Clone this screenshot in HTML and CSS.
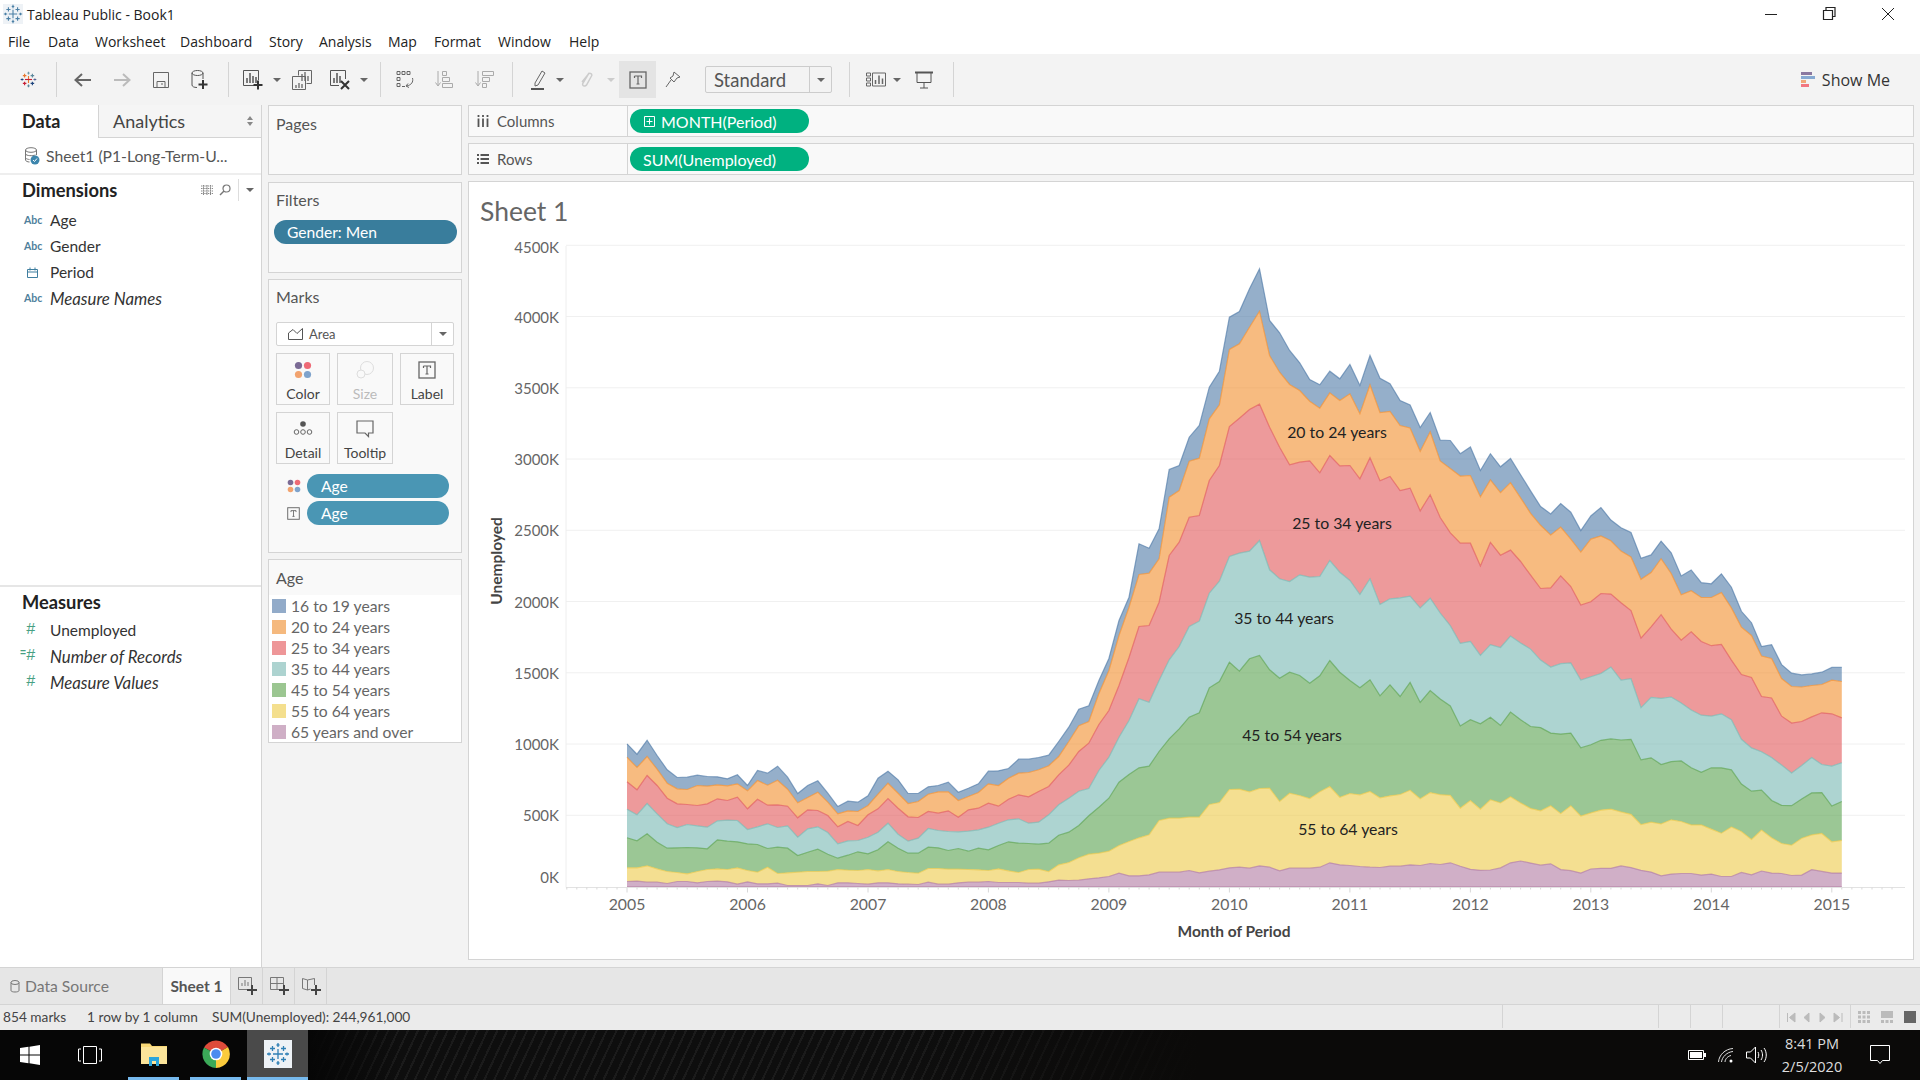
FILE: index.html
```html
<!DOCTYPE html>
<html lang="en">
<head>
    <meta charset="UTF-8">
    <title>Tableau Public - Book1</title>
    <link rel="stylesheet" href="styles.css">
</head>
<body>
    <svg class="defs" width="0" height="0">
        <symbol id="flake" viewBox="0 0 24 24">
            <path d="M12 7v10M7 12h10M6.500 4v5M4 6.500h5M17.500 4v5M15 6.500h5M6.500 15v5M4 17.500h5M17.500 15v5M15 17.500h5M12 1v4M10.500 3h3M12 19v4M10.500 21h3M3 10.500v3M1 12h4M21 10.500v3M19 12h4" fill="none" stroke="currentColor" stroke-width="1.300"/>
        </symbol>
        <symbol id="color-dots" viewBox="0 0 20 20">
            <circle cx="5" cy="5" r="4" fill="#7b6b95"/><circle cx="15" cy="5" r="4" fill="#ee6a76"/>
            <circle cx="5" cy="15" r="4" fill="#f2a36f"/><circle cx="15" cy="15" r="4" fill="#7fa3cc"/>
        </symbol>
        <symbol id="text-box" viewBox="0 0 18 18">
            <rect x="1" y="1" width="16" height="16" fill="none" stroke="#666" stroke-width="1.300"/>
            <path d="M5.500 5h7v2M5.500 5v2M9 5v8M7.500 13h3" fill="none" stroke="#666" stroke-width="1.200"/>
        </symbol>
        <symbol id="plus-mark" viewBox="0 0 10 10">
            <path d="M5 0v10M0 5h10" stroke="#444" stroke-width="2"/>
        </symbol>
    </svg>

    <header class="titlebar">
        <svg class="app-flake" width="20" height="20"><use href="#flake"/></svg>
        <span class="app-title">Tableau Public - Book1</span>
        <div class="win-controls">
            <svg width="57" height="16"><path d="M0 8.500h12" stroke="#222"/></svg>
            <svg width="60" height="16"><path d="M1.500 4.500h9v9h-9zM4 4.500v-3h9v9h-2.500" fill="none" stroke="#222" stroke-width="1.200"/></svg>
            <svg width="12" height="16"><path d="M0 2l12 12M12 2L0 14" stroke="#222"/></svg>
        </div>
    </header>

    <nav class="menubar">
        <span class="m-file">File</span><span class="m-data">Data</span><span class="m-worksheet">Worksheet</span><span class="m-dashboard">Dashboard</span><span class="m-story">Story</span><span class="m-analysis">Analysis</span><span class="m-map">Map</span><span class="m-format">Format</span><span class="m-window">Window</span><span>Help</span>
    </nav>

    <div class="toolbar">
        <div class="tool w56">
            <svg width="17" height="17" viewBox="0 0 24 24" fill="none" stroke-width="1.600">
                <path d="M12 7v10" stroke="#e8762c"/><path d="M7 12h10" stroke="#c72035"/>
                <path d="M6.500 4v5M4 6.500h5" stroke="#e8762c"/><path d="M17.500 4v5M15 6.500h5" stroke="#5b879b"/>
                <path d="M6.500 15v5M4 17.500h5" stroke="#c72035"/><path d="M17.500 15v5M15 17.500h5" stroke="#1f457e"/>
                <path d="M12 1v4M10.500 3h3" stroke="#7099a6"/><path d="M12 19v4M10.500 21h3" stroke="#59879b"/>
                <path d="M3 10.500v3M1 12h4" stroke="#1f447e"/><path d="M21 10.500v3M19 12h4" stroke="#5b6591"/>
            </svg>
        </div>
        <i class="tool-sep"></i>
        <div class="tool w39 ml6"><svg width="18" height="14"><path d="M1 7h16M8 1L1.500 7L8 13" fill="none" stroke="#666" stroke-width="2"/></svg></div>
        <div class="tool w39"><svg width="18" height="14"><path d="M1 7h16M10 1l6.500 6L10 13" fill="none" stroke="#bbb" stroke-width="2"/></svg></div>
        <div class="tool w39"><svg width="16" height="16"><path d="M.5.500h15v15H.5zM4 15.500V9.500h8v6M8 12h2" fill="none" stroke="#666"/></svg></div>
        <div class="tool w39"><svg width="18" height="20"><ellipse cx="6.500" cy="3" rx="5.500" ry="2.500" fill="none" stroke="#555"/><path d="M1 3v12c0 1.500 2 2.500 5 2.500M12 3v6" fill="none" stroke="#555"/><path d="M12 10v9M7.500 14.500h9" stroke="#333" stroke-width="2"/></svg></div>
        <i class="tool-sep ml9"></i>
        <div class="tool w24 ml12"><svg width="20" height="20"><path d="M15.500 10V.500H.5v15H11" fill="none" stroke="#555"/><path d="M4 13V8M7 13V3M10 13V6M13 13V7" stroke="#555" stroke-width="1.500"/><path d="M15 10.500v9M10.500 15h9" stroke="#333" stroke-width="2"/></svg></div>
        <div class="tool w24"><i class="caret"></i></div>
        <div class="tool w26"><svg width="20" height="20"><path d="M6.500 5.500V.5h13v13h-5" fill="none" stroke="#666"/><path d="M.5 6.500h13v13H.5z" fill="#f3f3f3" stroke="#666"/><path d="M4 18v-3M7 18v-5M10 18v-4M10 11V4M13 11V2M16 11V6" stroke="#666" stroke-width="1.300"/></svg></div>
        <div class="tool w26 ml12"><svg width="20" height="20"><path d="M15.500 9V.500H.5v15H9" fill="none" stroke="#555"/><path d="M4 13V8M7 13V3M10 13V6" stroke="#555" stroke-width="1.500"/><path d="M11 11l8 8M19 11l-8 8" stroke="#333" stroke-width="2"/></svg></div>
        <div class="tool w22"><i class="caret"></i></div>
        <i class="tool-sep ml5"></i>
        <div class="tool w40 ml4"><svg width="18" height="20"><path d="M1 1.500h3v3H1zM6 1.500h3v3H6zM11 1.500h3v3h-3zM1 7.500h3v3H1zM1 13.500h3v3H1zM6 16.500h3" fill="none" stroke="#666"/><path d="M16.500 8c1 4-1 7-6 8M12 13.500l-2 2.500 3 1.500" fill="none" stroke="#666"/></svg></div>
        <div class="tool w40"><svg width="20" height="20"><path d="M3 1v14M.5 12.500L3 16l2.500-3.500" fill="none" stroke="#aaa"/><path d="M7.500 1.500h4v4h-4zM7.500 7.500h7v4h-7zM7.500 13.500h10v4h-10z" fill="none" stroke="#aaa"/></svg></div>
        <div class="tool w40"><svg width="20" height="20"><path d="M3 1v14M.5 12.500L3 16l2.500-3.500" fill="none" stroke="#aaa"/><path d="M7.500 1.500h11v4h-11zM7.500 7.500h7v4h-7zM7.500 13.500h4v4h-4z" fill="none" stroke="#aaa"/></svg></div>
        <i class="tool-sep ml7"></i>
        <div class="tool w24 ml14"><svg width="16" height="20"><path d="M4 13l7-12 3 2-7 12-3 1z" fill="none" stroke="#666"/><path d="M0 19h13" stroke="#555" stroke-width="2"/></svg></div>
        <div class="tool w18"><i class="caret"></i></div>
        <div class="tool w34"><svg width="14" height="20"><path d="M10 3l-6 10c-1.500 3 2 4 3.500 2l5-9c1-2-1.500-3.500-3-2L3 12" fill="none" stroke="#ccc" stroke-width="1.500"/></svg></div>
        <div class="tool w16"><i class="caret caret-off"></i></div>
        <div class="tool w37 tool-on"><svg width="18" height="18"><use href="#text-box"/></svg></div>
        <div class="tool w34"><svg width="16" height="18"><path d="M9 1l6 5-3 1-3 4-4-4 3-2zM6 9l-5 7" fill="none" stroke="#666"/></svg></div>
        <div class="std-select ml15"><span class="std-text">Standard</span><span class="std-arrow"><i class="caret"></i></span></div>
        <i class="tool-sep ml17"></i>
        <div class="tool w24 ml14"><svg width="20" height="16"><path d="M.5 1h4v3h-4zM.5 6h4v3h-4zM.5 11h4v3h-4zM6.500 1h13v13h-13z" fill="none" stroke="#666"/><path d="M9.500 12V8M13 12V3.500M16.500 12V6.500" stroke="#666" stroke-width="1.500"/></svg></div>
        <div class="tool w18"><i class="caret"></i></div>
        <div class="tool w36"><svg width="18" height="18"><path d="M0 1.500h18" stroke="#555" stroke-width="2"/><path d="M2 2v9.500h14V2M9 11.500V17M5 17h8" fill="none" stroke="#555"/></svg></div>
        <i class="tool-sep ml11"></i>
        <div class="show-me">
            <svg width="14" height="16"><rect width="11" height="3" fill="#8a78a0"/><rect y="4" width="14" height="3" fill="#86a9d2"/><rect y="8" width="5" height="3" fill="#f0a777"/><rect y="12" width="8" height="3" fill="#f27680"/></svg>
            <span>Show Me</span>
        </div>
    </div>

    <main class="workspace">
        <aside class="data-pane">
            <div class="pane-tabs">
                <div class="pane-tab pane-tab-on">Data</div>
                <div class="pane-tab">Analytics<span class="updown"></span></div>
            </div>
            <div class="source-row">
                <svg width="16" height="18"><ellipse cx="7" cy="3" rx="5.500" ry="2.300" fill="none" stroke="#777"/><path d="M1.500 3v10c0 1 2 2 4 2M12.500 3v5" fill="none" stroke="#777"/><path d="M1.500 7c1 2 7 2 10 1M1.500 11c1 1 3 1.500 4 1.500" fill="none" stroke="#777"/><circle cx="11" cy="13" r="4.500" fill="#3d86ad"/><path d="M9 13l1.500 1.500L13 11.500" fill="none" stroke="#fff"/></svg>
                <span>Sheet1 (P1-Long-Term-U...</span>
            </div>
            <section class="dims">
                <div class="field-head">
                    <h3>Dimensions</h3>
                    <svg class="head-grid" width="12" height="10"><path d="M0 1h12M0 3.500h12M0 6h12M0 8.500h12M2.500 0v10M6 0v10M9.500 0v10" stroke="#888" stroke-dasharray="1.500 .7"/></svg>
                    <svg class="head-find" width="12" height="12"><circle cx="7.500" cy="4.500" r="3.500" fill="none" stroke="#777" stroke-width="1.200"/><path d="M5 7l-4 4" stroke="#777" stroke-width="1.400"/></svg>
                    <span class="head-sep"><i class="caret"></i></span>
                </div>
                <div class="field"><span class="f-abc">Abc</span>Age</div>
                <div class="field"><span class="f-abc">Abc</span>Gender</div>
                <div class="field"><span class="f-icon"><svg width="12" height="11"><path d="M.5 2.500h10v8H.5zM.5 5h10M3 .5v3M8 .5v3" fill="none" stroke="#3f7e9f"/></svg></span>Period</div>
                <div class="field field-calc"><span class="f-abc">Abc</span>Measure Names</div>
            </section>
            <section class="measures">
                <div class="field-head"><h3>Measures</h3></div>
                <div class="field"><span class="f-hash">#</span>Unemployed</div>
                <div class="field field-calc"><span class="f-hash"><b>=</b>#</span>Number of Records</div>
                <div class="field field-calc"><span class="f-hash">#</span>Measure Values</div>
            </section>
        </aside>

        <div class="cards">
            <section class="card card-pages"><div class="card-label">Pages</div></section>
            <section class="card card-filters">
                <div class="card-label">Filters</div>
                <div class="pill pill-filter">Gender: Men</div>
            </section>
            <section class="card card-marks">
                <div class="card-label">Marks</div>
                <div class="mark-type">
                    <svg width="16" height="12"><path d="M.5 11.500V5L5 1.500l4 4L14.500 .5v11z" fill="none" stroke="#555"/></svg>
                    <span>Area</span>
                    <span class="mark-arrow"><i class="caret"></i></span>
                </div>
                <div class="mark-btns">
                    <div class="mark-btn"><svg width="18" height="18"><use href="#color-dots"/></svg>Color</div>
                    <div class="mark-btn mark-off"><svg width="18" height="18"><circle cx="11" cy="7" r="6.500" fill="none" stroke="#ddd"/><circle cx="5" cy="13" r="4" fill="#f9f9f9" stroke="#ddd"/></svg>Size</div>
                    <div class="mark-btn"><svg width="18" height="18"><use href="#text-box"/></svg>Label</div>
                    <div class="mark-btn"><svg width="20" height="18"><circle cx="10" cy="4" r="2.800" fill="#555"/><circle cx="3.500" cy="12" r="2.300" fill="none" stroke="#666"/><circle cx="10" cy="12" r="2.300" fill="none" stroke="#666"/><circle cx="16.500" cy="12" r="2.300" fill="none" stroke="#666"/></svg>Detail</div>
                    <div class="mark-btn"><svg width="18" height="18"><path d="M1 1h16v12h-4.500v3.500L9 13H1z" fill="none" stroke="#666" stroke-width="1.200"/></svg>Tooltip</div>
                </div>
                <div class="mark-pill"><svg width="14" height="14"><use href="#color-dots"/></svg><div class="pill pill-dim">Age</div></div>
                <div class="mark-pill"><svg width="13" height="13"><use href="#text-box"/></svg><div class="pill pill-dim">Age</div></div>
            </section>
            <section class="card card-legend">
                <div class="card-label">Age</div>
                <ul class="legend">
                    <li><i class="sw sw-1"></i>16 to 19 years</li>
                    <li><i class="sw sw-2"></i>20 to 24 years</li>
                    <li><i class="sw sw-3"></i>25 to 34 years</li>
                    <li><i class="sw sw-4"></i>35 to 44 years</li>
                    <li><i class="sw sw-5"></i>45 to 54 years</li>
                    <li><i class="sw sw-6"></i>55 to 64 years</li>
                    <li><i class="sw sw-7"></i>65 years and over</li>
                </ul>
            </section>
        </div>

        <div class="view">
            <div class="shelf">
                <div class="shelf-label"><svg width="12" height="12"><path d="M1.500 0v2M1.500 3.500V12M6 0v2M6 3.500V12M10.500 0v2M10.500 3.500V12" stroke="#555" stroke-width="1.800"/></svg>Columns</div>
                <div class="pill pill-green pill-month"><svg width="11" height="11"><path d="M.5.500h10v10H.5zM5.500 2.500v6M2.500 5.500h6" fill="none" stroke="#fff"/></svg>MONTH(Period)</div>
            </div>
            <div class="shelf">
                <div class="shelf-label"><svg width="12" height="12"><path d="M0 2h2M3.500 2H12M0 6h2M3.500 6H12M0 10h2M3.500 10H12" stroke="#555" stroke-width="1.800"/></svg>Rows</div>
                <div class="pill pill-green">SUM(Unemployed)</div>
            </div>
            <div class="viz">
                <h2 class="sheet-title">Sheet 1</h2>
                <svg id="chart" class="chart" viewBox="469 232 1444 727" width="1444" height="727"></svg>
            </div>
        </div>
    </main>

    <div class="sheet-tabs">
        <div class="tab-source"><svg width="10" height="13"><ellipse cx="5" cy="2.500" rx="4" ry="2" fill="none" stroke="#777"/><path d="M1 2.500v8c0 2 8 2 8 0v-8" fill="none" stroke="#777"/></svg>Data Source</div>
        <div class="tab-sheet">Sheet 1</div>
        <div class="tab-new"><svg width="20" height="18"><path d="M13.500 8V.5H.5v12H9" fill="none" stroke="#777"/><path d="M4 9V6M7 9V3M10 9V5" stroke="#777"/><use href="#plus-mark" x="9" y="8" width="10" height="10"/></svg></div>
        <div class="tab-new"><svg width="20" height="18"><path d="M13.500 8V.5H.5v12H9M.5 6.500h13M7 .5v12" fill="none" stroke="#777"/><use href="#plus-mark" x="9" y="8" width="10" height="10"/></svg></div>
        <div class="tab-new"><svg width="20" height="18"><path d="M.5 1.500l5 1.500 7-1.500V8M.5 1.500v10l5 1.500 3-1M5.500 3v10" fill="none" stroke="#777"/><use href="#plus-mark" x="9" y="8" width="10" height="10"/></svg></div>
    </div>

    <div class="statusbar">
        <span class="st-marks">854 marks</span>
        <span class="st-rows">1 row by 1 column</span>
        <span>SUM(Unemployed): 244,961,000</span>
        <div class="st-cells">
            <div class="st-cell w156"></div>
            <div class="st-cell w32"></div>
            <div class="st-cell w32"></div>
            <div class="st-cell w57"></div>
            <div class="st-cell w71">
                <svg width="62" height="12"><path d="M.5 2v9M8 2L2.500 6.500 8 11zM22 2l-5 4.500 5 4.500zM33 2l5 4.500-5 4.500zM47 2l5.500 4.500L47 11zM55 2v9" fill="#bbb" stroke="#bbb" transform="translate(3 0)"/></svg>
            </div>
            <div class="st-cell st-views">
                <svg width="12" height="12"><path d="M0 0h3v3H0zM4.500 0h3v3h-3zM9 0h3v3H9zM0 4.500h3v3H0zM4.500 4.500h3v3h-3zM9 4.500h3v3H9zM0 9h3v3H0zM4.500 9h3v3h-3zM9 9h3v3H9z" fill="#bbb"/></svg>
                <svg width="12" height="12"><path d="M0 0h12v7H0zM0 9h3v3H0zM4.500 9h3v3h-3zM9 9h3v3H9z" fill="#bbb"/></svg>
                <svg width="12" height="12"><path d="M0 0h12v12H0z" fill="#666"/></svg>
            </div>
        </div>
    </div>

    <footer class="taskbar">
        <svg class="tb-win" width="20" height="20"><path d="M0 3l8.500-1.200v7.700H0zM9.500 1.700L20 0v9.500H9.500zM0 10.500h8.500v7.700L0 17zM9.500 10.500H20V20L9.500 18.300z" fill="#fff"/></svg>
        <svg class="tb-view" width="24" height="18"><path d="M5.500.5h13v17h-13zM3 3H.5v12H3M21 3h2.500v12H21" fill="none" stroke="#fff"/></svg>
        <div class="tb-app tb-explorer"><svg width="28" height="24"><path d="M1 4V1.500h9L12 4h15v18H1z" fill="#f8d775"/><path d="M1 5h26v17H1z" fill="#fbe49a"/><path d="M9 15h10v9h-3v-5h-4v5H9z" fill="#2ba5dc"/></svg></div>
        <div class="tb-app tb-chrome"><svg width="28" height="28" viewBox="0 0 28 28"><path d="M14 14L2 7.500A14 14 0 0 1 26 7z" fill="#de4b3a"/><path d="M14 14L26 7A14 14 0 0 1 14 28z" fill="#fbcb3c"/><path d="M14 14L14 28A14 14 0 0 1 2 7.500z" fill="#3ba958"/><circle cx="14" cy="14" r="6.300" fill="#fff"/><circle cx="14" cy="14" r="4.800" fill="#4b8bf0"/></svg></div>
        <div class="tb-app tb-tableau"><span class="tb-tile"><svg width="24" height="24"><use href="#flake"/></svg></span></div>
        <div class="tray">
            <svg width="18" height="10"><path d="M.5.500h15v9H.5z" fill="none" stroke="#fff"/><path d="M2 2h12v6H2z" fill="#fff"/><path d="M16 3h2v4h-2z" fill="#fff"/></svg>
            <svg width="16" height="15"><path d="M.5 14C1 7 7 1 15 .5M3.500 14C4 9 9 4 15 3.500M7 14c0-3 3-6 6-6.500" fill="none" stroke="#ddd"/><circle cx="13" cy="13" r="1.500" fill="#fff"/></svg>
            <svg width="21" height="18"><path d="M.5 6h4l5-5v16l-5-5h-4z" fill="none" stroke="#fff"/><path d="M12 6c1 2 1 4 0 6M15 4c2 3 2 7 0 10M18 2c3 4 3 10 0 14" fill="none" stroke="#fff"/></svg>
            <div class="clock"><span>8:41 PM</span><span>2/5/2020</span></div>
            <svg class="tray-note" width="20" height="20"><path d="M.5.500h19v15h-7l-2.500 3-2.500-3h-7z" fill="none" stroke="#fff"/></svg>
        </div>
    </footer>

    <script src="chart.js"></script>
</body>
</html>
```

FILE: styles.css
```css
* {
    box-sizing: border-box;
}
body {
    margin: 0;
    width: 1920px;
    height: 1080px;
    overflow: hidden;
    font-family: Lato, "Open Sans", sans-serif;
    font-size: 15px;
    color: #333;
    background-color: #fff;
}
.defs {
    display: block;
    height: 0;
}
i {
    display: block;
}
.titlebar {
    height: 28px;
    display: flex;
    align-items: center;
    padding-left: 3px;
    font-family: "Open Sans", sans-serif;
    font-size: 14px;
    color: #222;
}
.app-flake {
    color: #4a7fa5;
    background-color: #eef2f6;
    margin-right: 4px;
}
.win-controls {
    margin-left: auto;
    display: flex;
    padding-right: 26px;
}
.menubar {
    height: 26px;
    display: flex;
    align-items: center;
    padding-left: 8px;
    font-family: "Open Sans", sans-serif;
    font-size: 14px;
    color: #222;
}
.m-file { width: 40px; }
.m-data { width: 47px; }
.m-worksheet { width: 85px; }
.m-dashboard { width: 89px; }
.m-story { width: 50px; }
.m-analysis { width: 69px; }
.m-map { width: 46px; }
.m-format { width: 64px; }
.m-window { width: 71px; }
.toolbar {
    height: 51px;
    display: flex;
    align-items: center;
    background-color: #f3f3f3;
}
.tool {
    height: 37px;
    display: flex;
    align-items: center;
    justify-content: center;
    flex-shrink: 0;
}
.tool-on {
    background-color: #e4e4e4;
}
.tool-sep {
    width: 1px;
    height: 35px;
    background-color: #d4d4d4;
    flex-shrink: 0;
}
.w16 { width: 16px; }
.w18 { width: 18px; }
.w22 { width: 22px; }
.w24 { width: 24px; }
.w26 { width: 26px; }
.w34 { width: 34px; }
.w36 { width: 36px; }
.w37 { width: 37px; }
.w39 { width: 39px; }
.w40 { width: 40px; }
.w56 { width: 56px; }
.ml4 { margin-left: 4px; }
.ml5 { margin-left: 5px; }
.ml6 { margin-left: 6px; }
.ml7 { margin-left: 7px; }
.ml9 { margin-left: 9px; }
.ml11 { margin-left: 11px; }
.ml12 { margin-left: 12px; }
.ml14 { margin-left: 14px; }
.ml15 { margin-left: 15px; }
.ml17 { margin-left: 17px; }
.caret {
    width: 0;
    height: 0;
    border-left: 4px solid transparent;
    border-right: 4px solid transparent;
    border-top: 4px solid #666;
}
.caret-off {
    border-top-color: #ccc;
}
.std-select {
    width: 127px;
    height: 27px;
    display: flex;
    align-items: center;
    border: 1px solid #ccc;
    border-radius: 2px;
    font-size: 18.500px;
    color: #555;
}
.std-text {
    width: 103px;
    padding-left: 8px;
}
.std-arrow {
    flex: 1;
    height: 100%;
    display: flex;
    align-items: center;
    justify-content: center;
    border-left: 1px solid #ccc;
}
.show-me {
    margin-left: auto;
    margin-right: 30px;
    display: flex;
    align-items: center;
    gap: 7px;
    font-family: "Open Sans", sans-serif;
    font-size: 16px;
    color: #333;
}
.workspace {
    height: 862px;
    display: flex;
    background-color: #f3f3f3;
}
.data-pane {
    width: 262px;
    background-color: #fff;
    border-right: 1px solid #d4d4d4;
    flex-shrink: 0;
}
.pane-tabs {
    display: flex;
    height: 33px;
}
.pane-tab {
    flex: 1;
    position: relative;
    padding: 5px 0 0 14px;
    font-size: 18px;
    background-color: #f5f5f5;
    border-left: 1px solid #d4d4d4;
    border-bottom: 1px solid #d4d4d4;
    color: #444;
}
.pane-tab-on {
    flex: none;
    width: 98px;
    padding-left: 22px;
    font-weight: 700;
    background-color: #fff;
    border: 0;
    color: #222;
}
.updown {
    position: absolute;
    right: 8px;
    top: 11px;
    width: 0;
    height: 0;
    border-left: 3px solid transparent;
    border-right: 3px solid transparent;
    border-bottom: 4px solid #888;
}
.updown::after {
    content: "";
    position: absolute;
    left: -3px;
    top: 6px;
    border-left: 3px solid transparent;
    border-right: 3px solid transparent;
    border-top: 4px solid #888;
}
.source-row {
    height: 37px;
    display: flex;
    align-items: center;
    gap: 6px;
    padding-left: 24px;
    font-size: 15.700px;
    color: #555;
    border-bottom: 2px solid #eee;
}
.dims {
    height: 412px;
    border-bottom: 2px solid #e6e6e6;
}
.field-head {
    height: 30px;
    margin-bottom: 2px;
    display: flex;
    align-items: center;
    padding-left: 22px;
}
.field-head h3 {
    margin: 0;
    font-size: 18.300px;
    font-weight: 700;
    color: #222;
}
.head-grid {
    margin-left: auto;
}
.head-find {
    margin-left: 6px;
}
.head-sep {
    height: 22px;
    margin-left: 7px;
    width: 23px;
    display: flex;
    align-items: center;
    justify-content: center;
    border-left: 1px solid #ddd;
}
.measures .field-head {
    height: 29px;
    margin-bottom: 1px;
}
.field {
    height: 26px;
    display: flex;
    align-items: center;
    padding-left: 24px;
    font-size: 15.500px;
    color: #333;
}
.field-calc {
    font-size: 16.800px;
    font-style: italic;
}
.f-abc, .f-icon, .f-hash {
    width: 26px;
    flex-shrink: 0;
    font-size: 10.500px;
    font-style: normal;
    font-weight: 700;
    color: #4f7f9c;
}
.f-icon {
    padding-left: 3px;
    display: flex;
}
.f-hash {
    padding-left: 2px;
    font-family: "Liberation Mono", monospace;
    font-size: 16px;
    font-weight: 400;
    color: #47a083;
    position: relative;
}
.f-hash b {
    position: absolute;
    left: -4px;
    top: 1px;
    font-size: 10px;
}
.cards {
    width: 206px;
    padding: 0 6px;
    flex-shrink: 0;
    display: flex;
    flex-direction: column;
}
.card {
    border: 1px solid #d4d4d4;
    background-color: #f9f9f9;
}
.card-label {
    height: 35px;
    padding: 8px 0 0 7px;
    font-size: 16px;
    color: #555;
}
.card-pages {
    height: 70px;
}
.card-filters {
    height: 91px;
    margin-top: 7px;
}
.card-filters .card-label {
    height: 37px;
    padding-top: 7px;
}
.pill {
    height: 24px;
    display: flex;
    align-items: center;
    border-radius: 12px;
    font-size: 15.600px;
    color: #fff;
}
.pill-filter {
    margin: 0 4px 0 5px;
    padding-left: 13px;
    background-color: #397d9c;
}
.card-marks {
    height: 274px;
    margin-top: 6px;
    padding-left: 7px;
}
.card-marks .card-label {
    height: 42px;
    padding: 7px 0 0 0;
}
.mark-type {
    width: 178px;
    height: 24px;
    display: flex;
    align-items: center;
    padding-left: 11px;
    gap: 5px;
    font-size: 13px;
    color: #555;
    border: 1px solid #d4d4d4;
    border-radius: 2px;
    background-color: #fff;
}
.mark-arrow {
    margin-left: auto;
    width: 22px;
    height: 100%;
    display: flex;
    align-items: center;
    justify-content: center;
    border-left: 1px solid #d4d4d4;
}
.mark-btns {
    margin-top: 7px;
    display: grid;
    grid-template-columns: 54px 56px 54px;
    grid-auto-rows: 52px;
    gap: 7px;
}
.mark-btn {
    display: flex;
    flex-direction: column;
    align-items: center;
    padding-top: 7px;
    gap: 6px;
    font-size: 14px;
    border: 1px solid #d4d4d4;
    color: #444;
}
.mark-off {
    color: #bbb;
}
.mark-pill {
    display: flex;
    align-items: center;
    width: 173px;
    margin-top: 3px;
    padding-left: 11px;
}
.mark-btns + .mark-pill {
    margin-top: 10px;
}
.mark-pill .pill {
    margin-left: auto;
    width: 142px;
}
.pill-dim {
    padding-left: 14px;
    background-color: #4a96b4;
}
.card-legend {
    height: 184px;
    margin-top: 6px;
}
.legend {
    margin: 0;
    padding: 0 0 0 3px;
    list-style: none;
    background-color: #fff;
    height: 147px;
    font-size: 15.700px;
}
.legend li {
    height: 21px;
    display: flex;
    align-items: center;
    gap: 5px;
    color: #666;
}
.sw {
    width: 14px;
    height: 14px;
}
.sw-1 { background-color: #92abc9; }
.sw-2 { background-color: #f5b97e; }
.sw-3 { background-color: #ee9698; }
.sw-4 { background-color: #add3d0; }
.sw-5 { background-color: #9bc691; }
.sw-6 { background-color: #f4df8e; }
.sw-7 { background-color: #cfafc6; }
.view {
    width: 1446px;
    flex-shrink: 0;
}
.shelf {
    height: 32px;
    display: flex;
    align-items: center;
    margin-bottom: 6px;
    background-color: #f9f9f9;
    border: 1px solid #d4d4d4;
}
.shelf-label {
    width: 159px;
    height: 100%;
    display: flex;
    align-items: center;
    gap: 8px;
    padding-left: 8px;
    color: #555;
    border-right: 1px solid #d4d4d4;
}
.pill-green {
    width: 179px;
    margin-left: 2px;
    padding-left: 13px;
    font-size: 16px;
    background-color: #00b180;
}
.pill-month {
    padding-left: 14px;
    gap: 6px;
}
.viz {
    height: 779px;
    background-color: #fff;
    border: 1px solid #d4d4d4;
}
.sheet-title {
    margin: 0;
    height: 50px;
    padding: 13px 0 0 11px;
    font-size: 26.500px;
    font-weight: 400;
    color: #666;
}
.chart {
    display: block;
}
.chart text {
    font-family: Lato, sans-serif;
}
.tick-label {
    font-size: 15px;
    fill: #666;
}
.year-label {
    font-size: 15.800px;
    fill: #666;
}
.axis-title {
    font-size: 15.500px;
    font-weight: 700;
    fill: #444;
}
.area-label {
    font-size: 15.800px;
    fill: #222;
}
.sheet-tabs {
    height: 37px;
    display: flex;
    background-color: #e6e6e6;
    border-top: 1px solid #d4d4d4;
}
.tab-source {
    width: 163px;
    display: flex;
    align-items: center;
    gap: 5px;
    padding-left: 10px;
    font-size: 15.700px;
    color: #777;
    border-right: 1px solid #d4d4d4;
}
.tab-sheet {
    width: 68px;
    display: flex;
    align-items: center;
    justify-content: center;
    font-size: 15.500px;
    font-weight: 700;
    color: #555;
    background-color: #f9f9f9;
    border-right: 1px solid #d4d4d4;
}
.tab-new {
    width: 32px;
    display: flex;
    align-items: center;
    justify-content: center;
    padding-left: 3px;
    border-right: 1px solid #d4d4d4;
}
.statusbar {
    height: 26px;
    display: flex;
    align-items: center;
    padding: 0 0 2px 3px;
    font-size: 13.700px;
    color: #444;
    background-color: #ebebeb;
    border-top: 1px solid #d4d4d4;
}
.st-marks { width: 84px; }
.st-rows { width: 125px; }
.st-cells {
    margin-left: auto;
    height: 100%;
    display: flex;
}
.st-cell {
    height: 100%;
    display: flex;
    align-items: center;
    justify-content: center;
    border-left: 1px solid #d4d4d4;
}
.w156 { width: 156px; }
.w32 { width: 32px; }
.w57 { width: 57px; }
.w71 { width: 71px; }
.st-views {
    width: 70px;
    gap: 11px;
    padding-left: 3px;
}
.taskbar {
    height: 50px;
    display: flex;
    align-items: center;
    color: #fff;
    background-color: #0a0908;
    background-image:
        linear-gradient(90deg, #060606 0, #060606 310px, rgba(10, 9, 8, 0) 400px, rgba(10, 9, 8, 0) 900px, #0b0a09 1200px),
        repeating-linear-gradient(115deg, #1b1b1b 0, #1b1b1b 2px, #0e0e0e 2px, #0e0e0e 9px);
}
.tb-win {
    margin-left: 20px;
}
.tb-view {
    margin-left: 38px;
}
.tb-app {
    height: 50px;
    width: 51px;
    display: flex;
    align-items: center;
    justify-content: center;
    border-bottom: 3px solid #76b9ed;
}
.tb-explorer {
    margin-left: 26px;
}
.tb-chrome {
    margin-left: 11px;
}
.tb-tableau {
    width: 61px;
    margin-left: 6px;
    background-color: #4a4a4a;
}
.tb-tile {
    width: 28px;
    height: 28px;
    display: flex;
    align-items: center;
    justify-content: center;
    color: #2f7fb5;
    background-color: #eef2f6;
}
.tray {
    margin-left: auto;
    display: flex;
    align-items: center;
    gap: 12px;
    padding-right: 30px;
}
.clock {
    width: 66px;
    display: flex;
    flex-direction: column;
    align-items: center;
    gap: 6px;
    font-family: "Open Sans", sans-serif;
    font-size: 14.500px;
    line-height: 17px;
    color: #ddd;
}
.tray-note {
    margin-left: 13px;
}
```

FILE: chart.js
```js
// stack tops, px above the baseline, one value per month from Jan 2005
const tops = [
    [142.7,132.3,146.3,131,116.7,109,109.3,111.3,110,109.7,107.7,111.7,101,116,113.3,120.3,109.3,93,101,105.7,93.3,80,85.3,84.3,90.7,108.3,115.3,106.7,93,93,99.7,101,104.3,94.3,98.3,102.7,115.3,115.7,118,127.3,127.3,129,131.3,145,159.3,177.3,180.7,206,228,266,289.3,342.7,338.3,357.7,417,421,449.3,461,499.3,515.3,569.3,575,597.7,617.7,566,553.7,536,523.7,507,501.7,515.3,507.7,522,501,531,508.3,502.7,486,481.6,459,474,446.5,446,432.8,439.6,416,432.8,419.7,428,411.8,395.6,380,372.6,382.9,374.3,356,370.5,379,366.4,358.8,354,328.2,331.6,345.4,333.7,310.6,316.5,303.8,302.7,312.7,299.3,275.2,263.8,240,241.8,221.9,213.3,211.6,212.6,214.3,219.1,219.1],
    [129.3,119,130,117.3,103.3,97.7,97,101,100.3,101.7,100.7,102.7,95.7,106,101.3,106.3,97.3,83.7,89,94.3,84.3,72.7,75.7,75,81,92.3,103.3,93.3,83,85,92.3,94.7,94.7,86,90,94,102.7,101,108.3,113.3,114,116.7,120.7,130,145,160.7,165,193,216,251,279.3,312,313.3,327.7,389.3,396,425.3,428.3,467.7,481.7,537,542.7,559.3,575.3,531,514.3,502,496,485.3,478.3,493.7,486,492.7,472.7,501.7,474,475,461,458.6,435.2,454.8,425.5,418,410.4,411,389.8,406.6,393.9,403.9,388.7,373.2,361.2,351.6,359.5,347.4,334.4,347.4,350.5,345.7,335.4,329.6,307.2,314,327.8,313,291.7,295.8,289,289,294,278.6,259.4,251,230.5,228,208,200,199.5,201,202,206.4,205],
    [104.7,96.7,111,101,88.3,82.7,82,81,82.7,87.7,86,89.3,77.7,87.3,81.3,81.7,80.3,68.7,76.7,76,71,59.7,65,61,71.7,77.7,88,78.3,69.7,69,75,73.3,75.7,69.3,76.7,78.3,83.3,80.3,87.3,91.7,89.7,95,100,111.7,121.3,135,143.3,162,176,201,229,260,261,284.3,331,344.3,369.3,371,406,421,460,468.3,477,482.3,459.3,439.3,421.7,424.3,425.7,413.7,431,420.7,421,407.7,428.7,405.7,410,396,398.4,375.6,391.8,369,353.6,343.3,343.3,320.6,344,331.3,336.4,325,311.3,298,298.6,310.6,300,281.4,284.8,293,292.4,283.8,276,248.4,259.7,271.8,257.3,246.3,254.6,245,240.8,242,226.4,212,209,190,188.5,170.3,163.4,165,169.6,173.7,172.7,168.6],
    [77.3,71.7,83,72.7,62.7,59,62,60.7,59.3,65.7,66.3,66,57,59.7,62.7,59,60.7,49.3,57.7,59.7,54,42.7,45.7,46,49.3,54.3,63.3,52.3,45.3,48.3,58,56,55,54.7,55.3,56.7,59.3,63.3,66.7,67.7,63.3,64.3,71.7,81.7,88.3,95.3,98,116,129.3,149.3,166,187.7,184.3,206,226.7,240,260,265.3,293.3,305.3,330,333.3,335.3,346,316.7,307.7,305,311.7,309.3,310,326,314.3,306,292,307.7,282,287.7,288.7,290.3,278.6,288.3,273.5,260.8,243.2,245,231.2,241.8,239,250.4,243.6,237.4,226.4,219.5,222.9,223.6,206.4,209.8,213,219.5,206.4,207.8,178.9,189.2,188.2,189.5,183.4,176.5,171.3,170.3,172.7,166.8,147.2,138.6,134.8,129,121.4,113.5,121,129,122,120.4,123.8],
    [48.7,45.7,52.7,44.3,38.3,38.7,39,38.7,37.7,46.7,45.3,44.7,42.7,42,38,39.3,38.3,31,34.3,37.3,32.3,28.3,31.3,34.7,32.7,36.7,44.7,38.3,33.3,33.3,39.3,38.7,36,38,35.3,38.3,36.7,41,44.7,43.3,43,42.3,43.3,51.3,54.3,61,70.7,79.3,88.3,104.3,112,118.7,120.3,135,147.7,157.7,169.3,173.7,198.7,205,224.3,215.3,227.7,231,216.7,208.3,214.3,211,203.3,210.7,226,214.3,206,198.7,206.7,190.7,201.7,190,204,184,196,187.5,180.6,160.6,166.8,162.7,169.2,161,174.4,166.8,160,158.9,153.4,152.4,153.4,138.6,141.7,146.2,147.6,146.5,147.2,126.6,128.7,122,124.9,125.6,118.7,114.2,118.7,118.7,116.6,102.5,95.3,96.3,86,81.2,80.8,87.4,93.6,93.9,80.5,85],
    [18.7,18.7,20.7,17.7,15,14,12.7,15,17,17.7,17,18.7,16,14.3,19.3,13,13.7,14.3,15,15,15.3,17,16.3,16,17,15.7,17,15,14,13.3,18,18,17.3,17.3,17,16.7,16,17.7,15.7,14,17,17.3,15,21.7,24,28.7,32.3,33.3,35.3,41,45,48.7,51.7,66,68.3,68.3,69.3,69.3,82,84,97,97.3,94.7,98,98.3,85,93.3,91,88,94.7,100,89.3,93,91.7,95,88.7,90.7,92,96.3,87.7,93.9,91.8,91.2,78.4,86,77.4,86.7,83.6,89.8,83.6,78.1,75.7,80.8,72.9,80.8,70.5,73.6,76.4,77.4,74.6,72.2,61.9,64.3,62.6,66.7,65,61.6,61.6,57.4,53.3,59.5,55,47.1,56.4,48.8,43,41.3,48.2,51.6,53,44.7,46.1],
    [5,5.3,4.3,4.3,3,5,5,3.7,5,5.3,4.7,2.3,4.7,2.7,2.7,3.3,1,1,1,2.7,1,3.7,3.7,3,2.3,3.7,3.7,2.7,2.3,2,4.3,2.3,2.3,3.7,4.3,4.3,5,4,4,4,3.3,3.3,4.7,6.3,6,6.3,7.7,8.7,10,13.3,10.7,10.7,11.7,14.3,14.3,14.3,16,13.7,15.3,16.7,18.7,19.3,18.3,20.7,19.3,15.7,18.3,18.3,18.3,19.3,23.7,21.7,21,20,19.3,19,20.3,20.3,21.7,21,23,22,23.7,20.3,17.2,16.2,16.5,18.6,23.7,25.5,23.4,21.3,22.7,16.9,15.8,13.4,17.5,18.2,18.2,20.6,18.9,16.2,14.4,10.7,12.4,13,13,11.4,12.4,10,10,14.1,11.7,15.5,13.4,13,11,11.4,16.9,15.1,13.4,13.4]
];
const colors = ['#4e79a7', '#f28e2b', '#e15759', '#76b7b2', '#59a14f', '#edc948', '#b07aa1'];
const labels = [
    ['20 to 24 years', 1337, 433],
    ['25 to 34 years', 1342, 524],
    ['35 to 44 years', 1284, 619],
    ['45 to 54 years', 1292, 736],
    ['55 to 64 years', 1348, 830]
];

const BASE = 886.5;
const X0 = 627;
const DX = 10.04;
const PX_PER_500K = 71.25;
const xAt = (i) => +(X0 + DX * i).toFixed(1);
const yAt = (h) => +(BASE - h).toFixed(1);

const line = (h) => h.map((v, i) => `${xAt(i)},${yAt(v)}`);
let out = '';

// horizontal grid and y axis; the end labels sit inside the plot
for (let k = 0; k <= 9; k++) {
    const y = +(BASE - PX_PER_500K * k).toFixed(1);
    if (k > 0) out += `<path d="M566 ${y}H1905" stroke="#f0f0f0"/>`;
    const labelY = k === 0 ? y - 4 : k === 9 ? y + 8 : y + 6;
    out += `<text class="tick-label" x="559" y="${labelY}" text-anchor="end">${k * 500}K</text>`;
}
out += `<path d="M566 246V887.500" stroke="#eee"/><path d="M566 887.500H1905" stroke="#e2e2e2"/>`;

// month ticks under the baseline
let ticks = '';
for (let i = -6; i <= 126; i++) {
    ticks += `M${xAt(i)} 887.500v${i % 12 === 0 ? 5 : 2}`;
}
out += `<path d="${ticks}" stroke="#d8d8d8"/>`;

// bands, top one first
tops.forEach((top, n) => {
    const upper = line(top);
    const lower = n + 1 < tops.length ? line(tops[n + 1]) : [`${xAt(121)},${BASE}`, `${xAt(0)},${BASE}`].reverse();
    const pts = upper.concat(lower.reverse()).join(' ');
    out += `<polygon points="${pts}" fill="${colors[n]}" fill-opacity=".6"/>`;
    out += `<polyline points="${upper.join(' ')}" fill="none" stroke="${colors[n]}" stroke-opacity=".65" stroke-width="1.200"/>`;
});
out += `<path d="M${xAt(0)} ${BASE}H${xAt(121)}" stroke="#b07aa1" stroke-opacity=".7"/>`;

for (let y = 0; y <= 10; y++) {
    out += `<text class="year-label" x="${xAt(y * 12)}" y="910" text-anchor="middle">${2005 + y}</text>`;
}
labels.forEach(([t, x, y]) => {
    out += `<text class="area-label" x="${x}" y="${y + 5}" text-anchor="middle">${t}</text>`;
});
out += `<text class="axis-title" x="1234" y="937" text-anchor="middle">Month of Period</text>`;
out += `<text class="axis-title" transform="translate(502 561) rotate(-90)" text-anchor="middle">Unemployed</text>`;

document.getElementById('chart').innerHTML = out;
```
